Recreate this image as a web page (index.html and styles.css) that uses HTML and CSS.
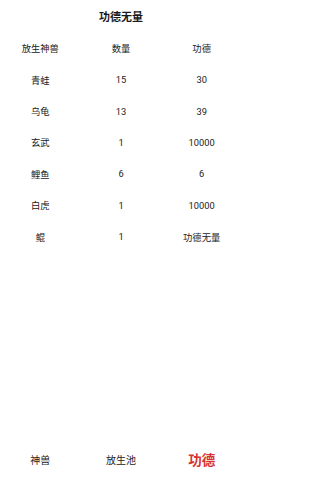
FILE: index.html
```html
<!DOCTYPE html>
<html lang="zh">
<head>
<meta charset="utf-8">
<link rel="stylesheet" href="styles.css">
</head>
<body>
<div class="app">
  <div class="title">功德无量</div>
  <div class="table">
    <div class="row"><span>放生神兽</span><span>数量</span><span>功德</span></div>
    <div class="row"><span>青蛙</span><span>15</span><span>30</span></div>
    <div class="row"><span>乌龟</span><span>13</span><span>39</span></div>
    <div class="row"><span>玄武</span><span>1</span><span>10000</span></div>
    <div class="row"><span>鲤鱼</span><span>6</span><span>6</span></div>
    <div class="row"><span>白虎</span><span>1</span><span>10000</span></div>
    <div class="row"><span>鲲</span><span>1</span><span>功德无量</span></div>
  </div>
  <div class="nav">
    <span class="tab">神兽</span>
    <span class="tab">放生池</span>
    <span class="tab active">功德</span>
  </div>
</div>
</body>
</html>
```
FILE: styles.css
```css
html, body {
  margin: 0;
  padding: 0;
  background: #fff;
}
body {
  font-family: Roboto, "Noto Sans CJK SC", sans-serif;
  color: #222;
}
.app {
  width: 242px;
  height: 480px;
  display: flex;
  flex-direction: column;
}
.title {
  height: 32.6px;
  display: flex;
  align-items: center;
  justify-content: center;
  font-size: 11px;
  font-weight: 700;
  color: #1a1a1a;
}
.table {
  display: flex;
  flex-direction: column;
}
.row {
  height: 31.4px;
  display: grid;
  grid-template-columns: 1fr 1fr 1fr;
  align-items: center;
  font-size: 9.3px;
}
.row span {
  text-align: center;
}
.nav {
  margin-top: auto;
  height: 42px;
  display: grid;
  grid-template-columns: 1fr 1fr 1fr;
  align-items: center;
  font-size: 10px;
  color: #222;
}
.tab {
  text-align: center;
}
.tab.active {
  color: #d63434;
  font-size: 13.5px;
  font-weight: 700;
}
```
